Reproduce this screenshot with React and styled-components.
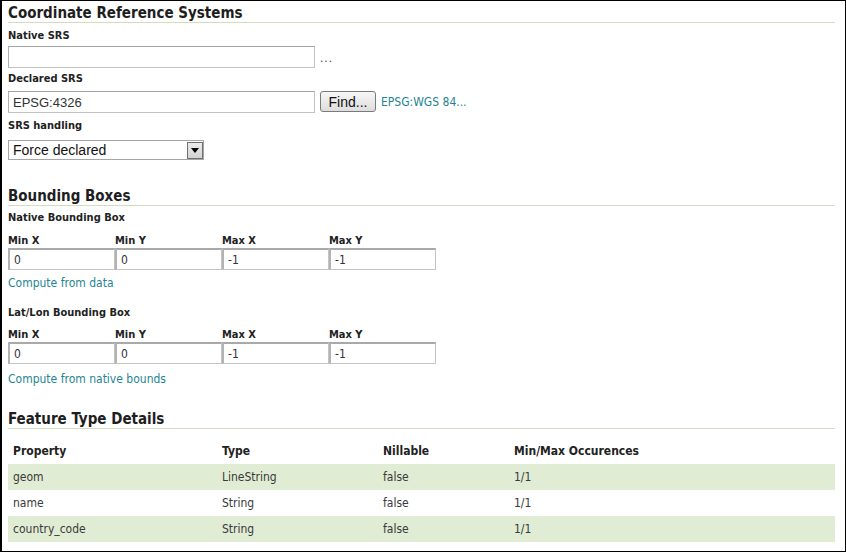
import React from 'react';
import styled, { createGlobalStyle } from 'styled-components';

const GlobalStyle = createGlobalStyle`
  html, body {
    margin: 0;
    padding: 0;
    background: #fff;
  }
  body {
    font-family: "DejaVu Sans Condensed", "DejaVu Sans", sans-serif;
    color: #222;
  }
`;

const Page = styled.div`
  box-sizing: border-box;
  width: 846px;
  height: 552px;
  border: 1px solid #000;
  border-left-width: 2px;
  padding: 4px 10px 0 6px;
  overflow: hidden;
`;

const SectionTitle = styled.h2`
  margin: ${(p) => p.$top || 0}px 0 0;
  font-size: 15px;
  line-height: 16px;
  font-weight: bold;
  color: #1e1e1e;
  padding-bottom: 1px;
  border-bottom: 1px solid #d3dcbb;
`;

const Label = styled.div`
  margin-top: ${(p) => p.$top || 0}px;
  font-size: 11px;
  line-height: 14px;
  font-weight: bold;
  color: #222;
`;

const Row = styled.div`
  display: flex;
  align-items: center;
  margin-top: ${(p) => p.$top || 0}px;
  gap: 5px;
`;

const TextInput = styled.input`
  box-sizing: border-box;
  width: 307px;
  height: 22px;
  margin: 0;
  padding: 1px 4px 0;
  border: 1px solid #c2c2c2;
  border-top-color: #a5a5a5;
  border-left-color: #b0b0b0;
  font-family: "Liberation Sans", Arial, sans-serif;
  font-size: 13px;
  color: #333;
  background: #fff;
`;

const Dots = styled.span`
  font-family: "Liberation Sans", Arial, sans-serif;
  font-size: 12px;
  color: #444;
  padding-top: 2px;
  letter-spacing: 1px;
`;

const Button = styled.button`
  box-sizing: border-box;
  height: 21px;
  width: 56px;
  margin: -1px 0 0;
  padding: 0;
  border: 1px solid #7a7a7a;
  border-radius: 3px;
  background: linear-gradient(#f6f6f6, #dedede);
  font-family: "Liberation Sans", Arial, sans-serif;
  font-size: 14px;
  color: #111;
`;

const Link = styled.a`
  font-size: 12px;
  color: #1f8593;
  text-decoration: none;
  line-height: 15px;
`;

const LinkLine = styled.div`
  margin-top: ${(p) => p.$top || 0}px;
  display: flex;
`;

const Select = styled.div`
  box-sizing: border-box;
  margin-top: 7px;
  width: 196px;
  height: 20px;
  display: flex;
  align-items: center;
  justify-content: space-between;
  border: 1px solid #a6a6a6;
  padding-left: 4px;
  font-family: "Liberation Sans", Arial, sans-serif;
  font-size: 14px;
  color: #111;
`;

const SelectArrow = styled.span`
  box-sizing: border-box;
  width: 16px;
  height: 17px;
  display: flex;
  align-items: center;
  justify-content: center;
  border: 1px solid #6f6f6f;
  background: linear-gradient(#ececec, #d2d2d2);
`;

const BoxGrid = styled.div`
  display: grid;
  grid-template-columns: repeat(4, 107px);
  width: 428px;
  margin-top: ${(p) => p.$top || 0}px;
`;

const BoxLabel = styled.div`
  font-size: 11px;
  line-height: 14px;
  font-weight: bold;
  color: #222;
`;

const BoxInput = styled.input`
  box-sizing: border-box;
  width: 107px;
  height: 22px;
  margin: 0;
  padding: 0 4px;
  border: 1px solid #c4c4c4;
  border-top: 2px solid #a9a9a9;
  border-left: 2px solid #b3b3b3;
  font-family: "DejaVu Sans Condensed", "DejaVu Sans", sans-serif;
  font-size: 12px;
  color: #333;
  background: #fff;
`;

const Table = styled.div`
  margin-top: 9px;
  width: 827px;
`;

const TableRow = styled.div`
  display: grid;
  grid-template-columns: 209px 161px 131px 1fr;
  height: 26px;
  align-items: center;
  background: ${(p) => (p.$shaded ? '#e1ecd4' : 'transparent')};
  font-size: 12px;
  font-weight: ${(p) => (p.$head ? 'bold' : 'normal')};
  color: ${(p) => (p.$head ? '#222' : '#3a3a3a')};
`;

const Cell = styled.div`
  padding-left: 5px;
`;

const attributes = [
  ['geom', 'LineString', 'false', '1/1'],
  ['name', 'String', 'false', '1/1'],
  ['country_code', 'String', 'false', '1/1'],
];

function BoundingBox({ values, top }) {
  const labels = ['Min X', 'Min Y', 'Max X', 'Max Y'];
  return (
    <BoxGrid $top={top}>
      {labels.map((l) => (
        <BoxLabel key={l}>{l}</BoxLabel>
      ))}
      {values.map((v, i) => (
        <BoxInput key={i} defaultValue={v} />
      ))}
    </BoxGrid>
  );
}

export default function App() {
  return (
    <>
      <GlobalStyle />
      <Page>
        <SectionTitle>Coordinate Reference Systems</SectionTitle>
        <Label $top={6}>Native SRS</Label>
        <Row $top={3}>
          <TextInput defaultValue="" />
          <Dots>...</Dots>
        </Row>
        <Label $top={4}>Declared SRS</Label>
        <Row $top={5}>
          <TextInput defaultValue="EPSG:4326" />
          <Button>Find...</Button>
          <Link href="#">EPSG:WGS 84...</Link>
        </Row>
        <Label $top={6}>SRS handling</Label>
        <Select>
          <span>Force declared</span>
          <SelectArrow>
            <svg width="8" height="5" viewBox="0 0 8 5">
              <path d="M0 0h8L4 5z" fill="#000" />
            </svg>
          </SelectArrow>
        </Select>

        <SectionTitle $top={28}>Bounding Boxes</SectionTitle>
        <Label $top={5}>Native Bounding Box</Label>
        <BoundingBox top={9} values={['0', '0', '-1', '-1']} />
        <LinkLine $top={6}>
          <Link href="#">Compute from data</Link>
        </LinkLine>
        <Label $top={15}>Lat/Lon Bounding Box</Label>
        <BoundingBox top={8} values={['0', '0', '-1', '-1']} />
        <LinkLine $top={8}>
          <Link href="#">Compute from native bounds</Link>
        </LinkLine>

        <SectionTitle $top={24}>Feature Type Details</SectionTitle>
        <Table>
          <TableRow $head>
            <Cell>Property</Cell>
            <Cell>Type</Cell>
            <Cell>Nillable</Cell>
            <Cell>Min/Max Occurences</Cell>
          </TableRow>
          {attributes.map((a, i) => (
            <TableRow key={a[0]} $shaded={i % 2 === 0}>
              {a.map((c, j) => (
                <Cell key={j}>{c}</Cell>
              ))}
            </TableRow>
          ))}
        </Table>
      </Page>
    </>
  );
}
